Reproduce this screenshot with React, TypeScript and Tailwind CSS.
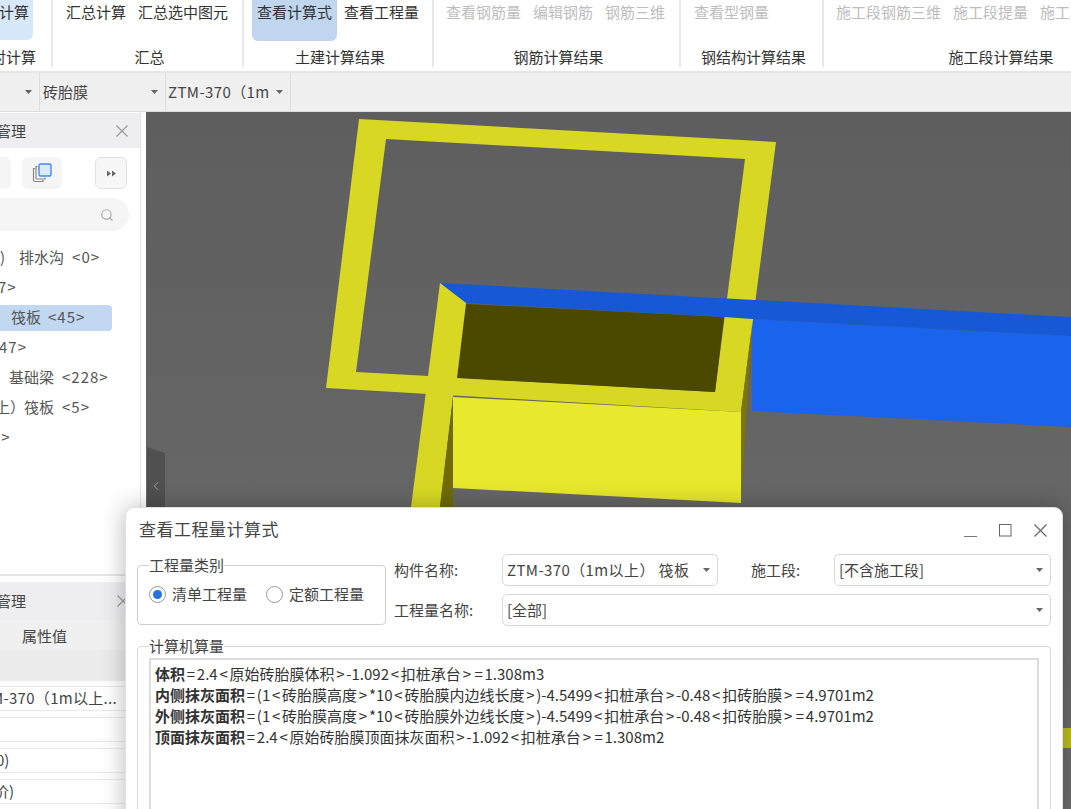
import { Search, ChevronLeft } from "lucide-react";

const FONT = "font-['Noto_Sans_CJK_SC','Microsoft_YaHei',sans-serif]";

type RibbonBtn = { label: string; tone?: "off" | "on" | "light" };
type RibbonGroup = { width: string; pad: string; labelPad: string; label: string; items: RibbonBtn[] };

const groups: RibbonGroup[] = [
  { width: "w-[191px]", pad: "pl-[8px]", labelPad: "pl-[4px]", label: "汇总", items: [{ label: "汇总计算" }, { label: "汇总选中图元" }] },
  { width: "w-[190px]", pad: "pl-[8px]", labelPad: "pl-[4px]", label: "土建计算结果", items: [{ label: "查看计算式", tone: "on" }, { label: "查看工程量" }] },
  {
    width: "w-[247px]",
    pad: "pl-[7px]",
    labelPad: "pl-[4px]",
    label: "钢筋计算结果",
    items: [
      { label: "查看钢筋量", tone: "off" },
      { label: "编辑钢筋", tone: "off" },
      { label: "钢筋三维", tone: "off" },
    ],
  },
  { width: "w-[143px]", pad: "pl-[8px]", labelPad: "pl-[4px]", label: "钢结构计算结果", items: [{ label: "查看型钢量", tone: "off" }] },
  {
    width: "w-[354px]",
    pad: "pl-[7px]",
    labelPad: "pl-0",
    label: "施工段计算结果",
    items: [
      { label: "施工段钢筋三维", tone: "off" },
      { label: "施工段提量", tone: "off" },
      { label: "施工段", tone: "off" },
    ],
  },
];

function Caret() {
  return (
    <svg width="7" height="4" viewBox="0 0 7 4" className="shrink-0">
      <polygon points="0,0 7,0 3.5,4" fill="#666" />
    </svg>
  );
}

function CloseIcon({ size, color }: { size: number; color: string }) {
  return (
    <svg width={size} height={size} viewBox="0 0 12 12" className="shrink-0">
      <path d="M0.5 0.5 L11.5 11.5 M11.5 0.5 L0.5 11.5" stroke={color} strokeWidth="1.1" fill="none" />
    </svg>
  );
}

function Ribbon() {
  return (
    <div className="flex h-[73px] shrink-0 border-b-2 border-[#e6e6e6] bg-white pb-[4px]">
      <div className="flex h-[67px] w-[53px] shrink-0 flex-col justify-between border-r-2 border-[#e8e8e8]">
        <div className="flex h-[40px] w-[33px] justify-end whitespace-nowrap rounded-br-md bg-[#d8e8fb] pr-[4px] text-[15px] leading-[24px] text-[#333]">
          计算
        </div>
        <div className="flex justify-end whitespace-nowrap pr-[15px] text-[15px] leading-[20px] text-[#333]">
          <span className="-ml-[20px]">对计算</span>
        </div>
      </div>
      {groups.map((g) => (
        <div key={g.label} className={`flex h-[67px] shrink-0 flex-col justify-between border-r-2 border-[#e8e8e8] last:border-r-0 ${g.width}`}>
          <div className={`flex gap-[2px] ${g.pad}`}>
            {g.items.map((b) => (
              <div
                key={b.label}
                className={`h-[41px] whitespace-nowrap rounded-b-md px-[5px] text-[15px] leading-[24px] ${
                  b.tone === "on" ? "bg-[#c0d6ef] text-[#333]" : b.tone === "off" ? "text-[#bdbdbd]" : "text-[#333]"
                }`}
              >
                {b.label}
              </div>
            ))}
          </div>
          <div className={`text-center text-[15px] leading-[20px] text-[#333] ${g.labelPad}`}>{g.label}</div>
        </div>
      ))}
    </div>
  );
}

function SelectRow() {
  return (
    <div className="flex h-[39px] shrink-0 border-b border-[#dcdcdc] bg-[#f0f0f0] text-[15px] text-[#444]">
      <div className="flex w-[40px] items-center justify-end border-r border-[#dcdcdc] pr-[7px]">
        <Caret />
      </div>
      <div className="flex w-[126px] items-center justify-between border-r border-[#dcdcdc] pl-[3px] pr-[7px]">
        <span>砖胎膜</span>
        <Caret />
      </div>
      <div className="flex w-[125px] items-center justify-between overflow-hidden whitespace-nowrap border-r border-[#dcdcdc] pl-[2px] pr-[7px]">
        <span className="tracking-[0.4px]">ZTM-370（1m</span>
        <Caret />
      </div>
    </div>
  );
}

function TreeRow({ children, selected }: { children: React.ReactNode; selected?: boolean }) {
  return (
    <div className={`flex h-[26px] w-[112px] items-center whitespace-nowrap rounded-r-sm pb-[2px] text-[15px] text-[#555] ${selected ? "bg-[#c2d8f0]" : ""}`}>
      {children}
    </div>
  );
}

function LeftPanel() {
  return (
    <div className="flex w-[146px] shrink-0 flex-col overflow-hidden bg-white pr-[5px]">
      <div className="h-[464px] shrink-0 border-b-2 border-r border-[#e6e6e6]">
        <div className="mt-[1px] flex h-[35px] items-center justify-between bg-[#eeeef0] pr-[12px] text-[15px] text-[#444]">
          <span className="-ml-[4px] translate-y-[1px]">管理</span>
          <CloseIcon size={12} color="#999" />
        </div>
        <div className="mt-[9px] flex h-[32px] items-center">
          <div className="h-[32px] w-[11px] rounded-r-md bg-[#f5f5f5]" />
          <div className="ml-[11px] flex h-[32px] w-[40px] items-center justify-center rounded-md bg-[#f5f5f5]">
            <svg width="22" height="20" viewBox="0 0 22 20" fill="none">
              <path d="M4 5.5 H2.5 V17 a1.5 1.5 0 0 0 1.5 1.5 H12 V17" stroke="#888" strokeWidth="1.2" />
              <path d="M6.5 3.5 H5 V15 a1 1 0 0 0 1 1 H14 V14.5" stroke="#888" strokeWidth="1.2" />
              <rect x="8" y="1" width="12" height="12" rx="1.5" fill="#dbe9fb" stroke="#3f8cf0" strokeWidth="1.4" />
            </svg>
          </div>
          <div className="ml-[33px] flex h-[32px] w-[32px] items-center justify-center rounded-md border border-[#e2e2e2] bg-[#f7f7f7]">
            <svg width="9" height="7" viewBox="0 0 9 7">
              <polygon points="0,0.5 4,3.5 0,6.5" fill="#666" />
              <polygon points="5,0.5 9,3.5 5,6.5" fill="#666" />
            </svg>
          </div>
        </div>
        <div className="mt-[9px] flex h-[33px] w-[129px] items-center justify-end rounded-r-full bg-[#f5f5f5] pr-[15px]">
          <Search size={14} strokeWidth={2} className="text-[#aaa]" />
        </div>
        <div className="mt-[14px] flex flex-col gap-[4px]">
          <TreeRow>
            <span>)</span>
            <span className="ml-[14px]">排水沟</span>
            <span className="ml-[8px] tracking-[1px]">&lt;0&gt;</span>
          </TreeRow>
          <TreeRow>
            <span className="-ml-[2px] tracking-[1px]">7&gt;</span>
          </TreeRow>
          <TreeRow selected>
            <span className="ml-[11px]">筏板</span>
            <span className="ml-[7px] tracking-[1px]">&lt;45&gt;</span>
          </TreeRow>
          <TreeRow>
            <span className="-ml-[1px] tracking-[1px]">47&gt;</span>
          </TreeRow>
          <TreeRow>
            <span className="ml-[9px]">基础梁</span>
            <span className="ml-[8px] tracking-[1px]">&lt;228&gt;</span>
          </TreeRow>
          <TreeRow>
            <span className="-ml-[5px]">上）</span>
            <span className="-ml-[1px]">筏板</span>
            <span className="ml-[8px] tracking-[1px]">&lt;5&gt;</span>
          </TreeRow>
          <TreeRow>
            <span className="-ml-[8px] tracking-[1px]">5&gt;</span>
          </TreeRow>
        </div>
      </div>
      <div className="mt-[6px] flex-1 text-[15px] text-[#444]">
        <div className="flex h-[38px] items-center justify-between bg-[#eeeef0] pr-[12px]">
          <span className="-ml-[4px]">管理</span>
          <CloseIcon size={12} color="#999" />
        </div>
        <div className="flex h-[30px] items-center bg-[#f0f0f0] pl-[22px] leading-none">属性值</div>
        <div className="h-[31px] bg-[#ececec]" />
        <div className="mt-[5px] flex flex-col gap-[6px]">
          <div className="h-[25px] overflow-hidden whitespace-nowrap border-y border-[#e8e8e8] leading-[22px]">
            <span className="-ml-[9px] inline-block tracking-[0.3px]">M-370（1m以上...</span>
          </div>
          <div className="h-[25px] border-y border-[#e8e8e8]" />
          <div className="h-[25px] border-y border-[#e8e8e8] leading-[22px]">
            <span className="-ml-[4px] inline-block">0)</span>
          </div>
          <div className="h-[25px] border-y border-[#e8e8e8] leading-[22px]">
            <span className="-ml-[6px] inline-block">价)</span>
          </div>
        </div>
      </div>
    </div>
  );
}

function Viewport() {
  return (
    <div className="relative min-w-0 flex-1 bg-gradient-to-b from-[#5e5e5e] to-[#6d6d6d]">
      <svg className="block h-full w-full" viewBox="146 112 925 697">
        <polygon points="752,319 1071,336 1071,427 752,411" fill="#1a63ec" />
        <path
          fillRule="evenodd"
          d="M359,119 L776,142 L741,412 L326,388 Z M386,139 L745,159 L715,392 L356,372 Z"
          fill="#d8d824"
        />
        <polygon points="466,304 724,317 715,392 457,378" fill="#4b4800" />
        <polygon points="440,283 1071,317 1071,336 752,319 724,317 466,303" fill="#1658d6" />
        <polygon points="752,325 741,412 741,503" fill="#7a7608" />
        <polygon points="440,283 466,303 457,378 453,397 440,507 411,507 428,376" fill="#d8d824" />
        <polygon points="453,397 453,507 440,507" fill="#6f6c08" />
        <polygon points="453,397 741,412 741,503 453,488" fill="#e8e82c" />
        <polygon points="147,447 165,453 165,510 147,510" fill="#505050" />
        <rect x="1060" y="728" width="11" height="20" fill="#bfbf20" />
      </svg>
      <ChevronLeft size={14} strokeWidth={1.5} className="absolute left-[3px] top-[367px] text-[#a8a8a8]" />
    </div>
  );
}

function Field({ text, width, track }: { text: string; width: string; track?: boolean }) {
  return (
    <div className={`flex h-[32px] items-center justify-between rounded-[5px] border border-[#d8d8d8] pl-[4px] pr-[7px] text-[15px] text-[#444] ${width}`}>
      <span className={`whitespace-nowrap ${track ? "tracking-[0.4px]" : ""}`}>{text}</span>
      <Caret />
    </div>
  );
}

function Radio({ label, checked }: { label: string; checked?: boolean }) {
  return (
    <div className="flex items-center gap-[6px]">
      <span className="flex h-[17px] w-[17px] items-center justify-center rounded-full border border-[#999] bg-white">
        {checked && <span className="h-[9px] w-[9px] rounded-full bg-[#1f74e0]" />}
      </span>
      <span>{label}</span>
    </div>
  );
}

const formula = [
  { head: "体积", body: "=2.4<原始砖胎膜体积>-1.092<扣桩承台>=1.308m3" },
  { head: "内侧抹灰面积", body: "=(1<砖胎膜高度>*10<砖胎膜内边线长度>)-4.5499<扣桩承台>-0.48<扣砖胎膜>=4.9701m2" },
  { head: "外侧抹灰面积", body: "=(1<砖胎膜高度>*10<砖胎膜外边线长度>)-4.5499<扣桩承台>-0.48<扣砖胎膜>=4.9701m2" },
  { head: "顶面抹灰面积", body: "=2.4<原始砖胎膜顶面抹灰面积>-1.092<扣桩承台>=1.308m2" },
];

// yahei draws < > = a lot wider than noto does
function FormulaBody({ text }: { text: string }) {
  return (
    <>
      {text.split(/([<>=])/).map((part, i) =>
        part === "<" || part === ">" || part === "=" ? (
          <span key={i} className="px-[1.75px]">
            {part}
          </span>
        ) : (
          part
        ),
      )}
    </>
  );
}

function Dialog() {
  return (
    <div className="absolute left-[125px] top-[507px] flex h-[330px] w-[938px] flex-col rounded-[9px] border border-[#e0e0e0] bg-white px-[11px] text-[#444] shadow-[0_0_24px_rgba(0,0,0,0.28)]">
      <div className="flex h-[48px] shrink-0 items-center justify-between pl-[2px] pr-[4px]">
        <span className="-translate-y-[3px] text-[17px] tracking-[0.5px]">查看工程量计算式</span>
        <div className="flex -translate-y-[2px] items-center gap-[22px]">
          <svg width="13" height="13" viewBox="0 0 13 13">
            <path d="M0 12.5 H13" stroke="#777" strokeWidth="1" />
          </svg>
          <svg width="13" height="13" viewBox="0 0 13 13">
            <rect x="0.5" y="0.5" width="11.5" height="11.5" fill="none" stroke="#666" strokeWidth="1" />
          </svg>
          <CloseIcon size={13} color="#666" />
        </div>
      </div>
      <div className="flex text-[15px]">
        <fieldset className="h-[69px] w-[249px] shrink-0 rounded-[4px] border border-[#cfcfcf] pl-[11px]">
          <legend className="leading-[18px]">工程量类别</legend>
          <div className="mt-[9px] flex gap-[19px]">
            <Radio label="清单工程量" checked />
            <Radio label="定额工程量" />
          </div>
        </fieldset>
        <div className="-mt-[2px] ml-[8px] flex flex-1 flex-col gap-[8px]">
          <div className="flex items-center">
            <span className="w-[108px]">构件名称:</span>
            <Field text="ZTM-370（1m以上） 筏板" width="w-[216px]" track />
            <span className="ml-[33px] w-[83px]">施工段:</span>
            <Field text="[不含施工段]" width="w-[217px]" />
          </div>
          <div className="flex items-center">
            <span className="w-[108px]">工程量名称:</span>
            <Field text="[全部]" width="w-[549px]" />
          </div>
        </div>
      </div>
      <fieldset className="mt-[11px] min-h-0 flex-1 rounded-[4px] border border-[#d8d8d8] px-[11px]">
        <legend className="text-[15px] leading-[18px]">计算机算量</legend>
        <div className="mt-[3px] h-full border-2 border-[#dcdcdc] pl-[4px] pt-[3px] text-[15px] leading-[21px] text-[#333]">
          {formula.map((f) => (
            <div key={f.head} className="whitespace-nowrap">
              <b className="font-bold">{f.head}</b>
              <FormulaBody text={f.body} />
            </div>
          ))}
        </div>
      </fieldset>
    </div>
  );
}

export default function App() {
  return (
    <div className={`relative flex h-[809px] w-[1071px] flex-col overflow-hidden bg-white ${FONT}`}>
      <Ribbon />
      <SelectRow />
      <div className="flex min-h-0 flex-1">
        <LeftPanel />
        <Viewport />
      </div>
      <Dialog />
    </div>
  );
}
